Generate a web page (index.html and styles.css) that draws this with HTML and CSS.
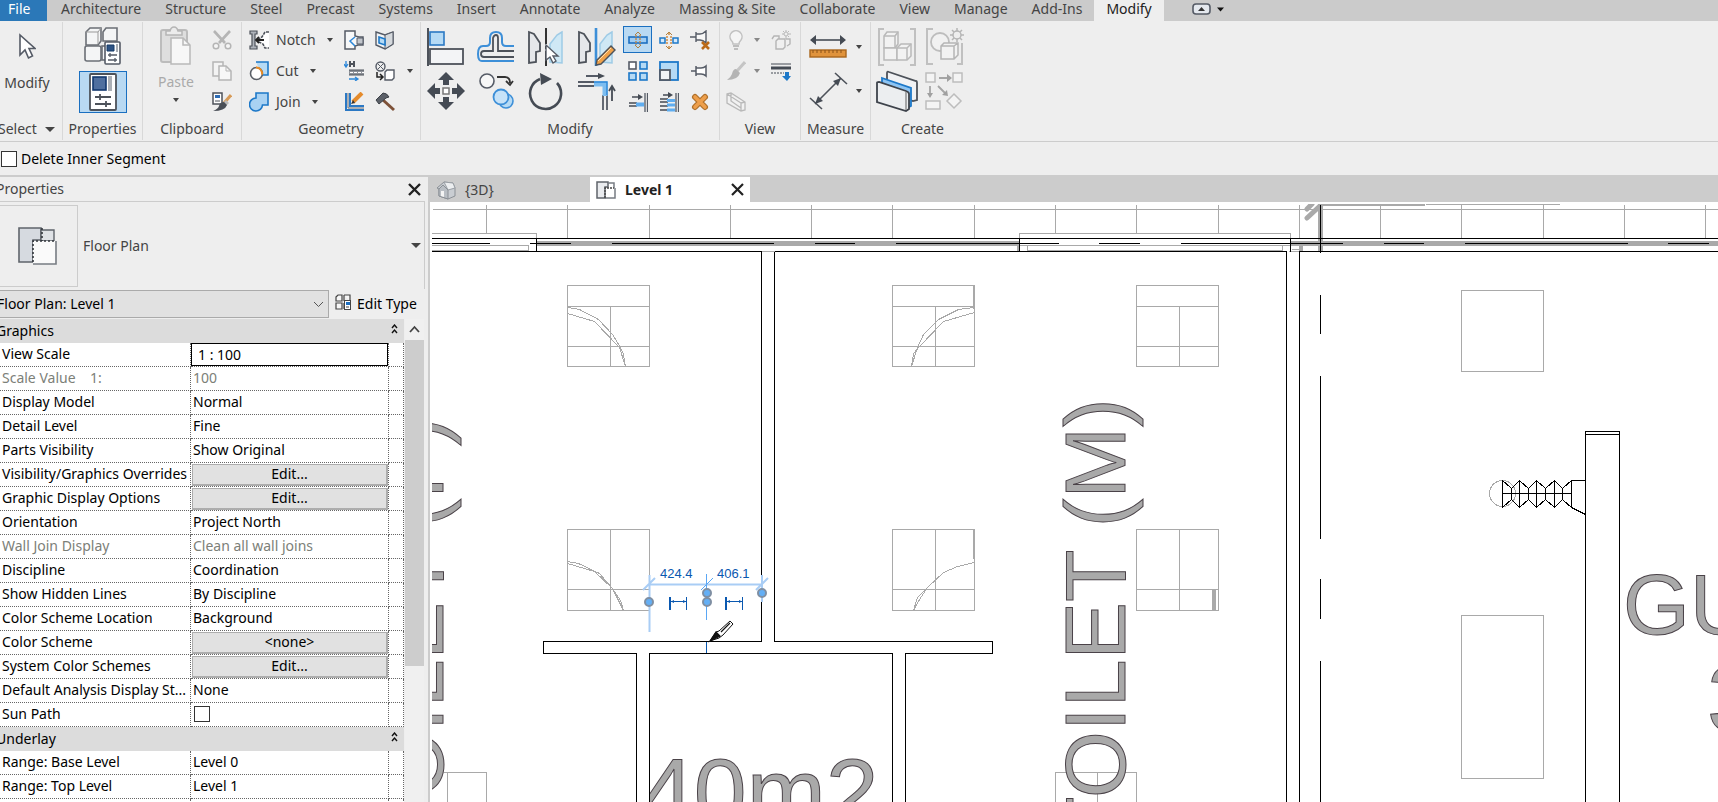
FILE: index.html
```
<!DOCTYPE html>
<html lang="en">
<head>
  <meta charset="utf-8">
  <title>Floor Plan: Level 1</title>
  <link rel="stylesheet" href="styles.css">
</head>
<body>
  <nav class="tabs">
    <button class="tab file">File</button>
    <button class="tab">Architecture</button>
    <button class="tab">Structure</button>
    <button class="tab">Steel</button>
    <button class="tab">Precast</button>
    <button class="tab">Systems</button>
    <button class="tab">Insert</button>
    <button class="tab">Annotate</button>
    <button class="tab">Analyze</button>
    <button class="tab">Massing &amp; Site</button>
    <button class="tab">Collaborate</button>
    <button class="tab">View</button>
    <button class="tab">Manage</button>
    <button class="tab">Add-Ins</button>
    <button class="tab active">Modify</button>
    <button class="collapse" aria-label="Minimize ribbon">
      <svg width="32" height="14" viewBox="0 0 32 14"><rect x="1" y="2" width="17" height="10" rx="3" fill="#e4e8ee" stroke="#555b66" stroke-width="1.6"/><path d="M6 9h7L9.500 5z" fill="#333"/><path d="M25 5.500h7l-3.500 4z" fill="#111"/></svg>
    </button>
  </nav>

  <!-- ribbon -->
  <div class="ribbon">
    <section class="panel select">
      <div class="body">
        <button class="tall">
          <svg width="18" height="28" viewBox="0 0 18 28"><path d="M2 2v20l5-5 3.500 8 4-2-3.500-7.500h6z" fill="#fff" stroke="#555b66" stroke-width="1.6"/></svg>
          Modify
        </button>
      </div>
      <h2>Select <i class="caret big"></i></h2>
    </section>

    <section class="panel properties">
      <div class="body stack">
        <button aria-label="Type Properties">
          <svg width="40" height="40" viewBox="0 0 40 40"><g fill="#f4f5f6" stroke="#6b6f76" stroke-width="1.6"><path d="M3 6l4-4h11v13l-3 4H3z"/><path d="M20 6l3-4h11v13H20z"/><rect x="2" y="20" width="16" height="15" rx="2"/><rect x="19" y="20" width="10" height="14"/></g><path d="M3 6h12v12M15 6l3-4" fill="none" stroke="#999" /><rect x="22" y="16" width="15" height="22" rx="1" fill="#fff" stroke="#555b66" stroke-width="1.6"/><path d="M24 19h7v6h-7z" fill="#2d5283" stroke="#163a66"/><path d="M34 18v8" stroke="#a8acb2" stroke-width="2"/><path d="M25 29h9M25 34h9M27 27v4M32 32v4" stroke="#555b66" stroke-width="1.300"/></svg>
        </button>
        <button class="on wide" aria-label="Properties palette">
          <svg width="30" height="38" viewBox="0 0 30 38"><rect x="2" y="1" width="26" height="36" rx="1" fill="#fff" stroke="#4d525a" stroke-width="1.800"/><rect x="5" y="4" width="13" height="13" fill="#4f6f9f" stroke="#12386e" stroke-width="1.6"/><path d="M22 3v15" stroke="#abb0b7" stroke-width="4"/><path d="M7 24h16M7 31h16M12 21v6M18 28v6" stroke="#4d525a" stroke-width="1.800"/></svg>
        </button>
      </div>
      <h2>Properties</h2>
    </section>

    <section class="panel clipboard">
      <div class="body">
        <button class="tall paste" disabled>
          <svg width="34" height="40" viewBox="0 0 34 40"><rect x="2" y="4" width="26" height="32" rx="2" fill="#dedede" stroke="#bcbcbc" stroke-width="2"/><path d="M7 9V5h4q1-4 4-4t4 4h4v4z" fill="#ececec" stroke="#b5b5b5" stroke-width="1.500"/><path d="M12 12h12l7 7v19H12z" fill="#f7f7f7" stroke="#b9b9b9" stroke-width="1.500"/><path d="M24 12v7h7" fill="none" stroke="#b9b9b9" stroke-width="1.500"/></svg>
          Paste
          <i class="caret"></i>
        </button>
        <div class="small-grid">
          <button aria-label="Cut to clipboard"><svg width="20" height="20" viewBox="0 0 20 20"><path d="M2 1l11 12M18 1L7 13" stroke="#b5b5b5" stroke-width="2.600"/><circle cx="4" cy="16" r="2.800" fill="#f5f5f5" stroke="#b5b5b5" stroke-width="1.500"/><circle cx="16" cy="16" r="2.800" fill="#f5f5f5" stroke="#b5b5b5" stroke-width="1.500"/></svg></button>
          <button aria-label="Copy to clipboard"><svg width="20" height="20" viewBox="0 0 20 20"><path d="M9 15H1V1h10v4" fill="#f3f3f3" stroke="#b5b5b5" stroke-width="1.500"/><path d="M7 5h7l5 5v9H7z" fill="#f8f8f8" stroke="#b5b5b5" stroke-width="1.500"/><path d="M14 5v5h5" fill="none" stroke="#b5b5b5"/></svg></button>
          <button aria-label="Match type"><svg width="20" height="20" viewBox="0 0 20 20"><rect x="1" y="1" width="9" height="11" fill="#fff" stroke="#4d525a" stroke-width="1.500"/><path d="M3 3h5v3H3z" fill="#2d6cb5"/><path d="M3 9h5" stroke="#4d525a"/><path d="M19 3l-7 8" stroke="#d79a57" stroke-width="3"/><path d="M14 8l3 3-3 3-3-3z" fill="#bbb"/><path d="M12 10l3 3q-2 6-14 6 5-2 6-5 1-4 5-4z" fill="#4a4f57"/></svg></button>
        </div>
      </div>
      <h2>Clipboard</h2>
    </section>

    <section class="panel geometry">
      <div class="body">
        <div class="labelled">
          <button><svg width="20" height="20" viewBox="0 0 20 20"><path d="M1 1h7v3H6v12h2v3H1v-3h2V4H1z" fill="#aeb3ba" stroke="#4d525a" stroke-width="1.200"/><path d="M20 2h-4l-3 5-3 2v3l4 2 2 4h4" fill="#fff" stroke="#4d525a" stroke-width="1.600" stroke-dasharray="3 1"/><path d="M7 10h8M10 7l-3 3 3 3" fill="none" stroke="#222" stroke-width="1.800"/></svg> Notch <i class="caret"></i></button>
          <button><svg width="20" height="20" viewBox="0 0 20 20"><path d="M7 1h12v13h-6" fill="#b5daf5" stroke="#1d78c8" stroke-width="1.600"/><circle cx="7.500" cy="12.500" r="6" fill="#fff" stroke="#5a5f67" stroke-width="1.600"/><path d="M7 6.500a6 6 0 0 1 6 7" fill="none" stroke="#e88b25" stroke-width="2"/></svg> Cut <i class="caret"></i></button>
          <button><svg width="20" height="20" viewBox="0 0 20 20"><path d="M7 1h12v12h-5.500a6.500 6.500 0 1 1-6.500-7z" fill="#a9d2f3" stroke="#1d78c8" stroke-width="1.600"/></svg> Join <i class="caret"></i></button>
        </div>
        <div class="small-grid three">
          <button aria-label="Cope"><svg width="20" height="20" viewBox="0 0 20 20"><path d="M1 1h10v5l4 1h4v8h-5l-3 1v3H1z" fill="#f7f8f9" stroke="#555b66" stroke-width="1.500"/><path d="M11 7l-5 4 5 5" fill="none" stroke="#2b86d8" stroke-width="1.500"/><path d="M13 8h6v6h-6z" fill="#c2c6cc" stroke="#555b66"/></svg></button>
          <button aria-label="Wall joins"><svg width="20" height="20" viewBox="0 0 20 20"><path d="M1 2l9 3 8-3v12l-8 5-9-4z" fill="#f1f3f5" stroke="#555b66" stroke-width="1.400"/><path d="M10 5v14l8-5V2z" fill="#d5d9dd" stroke="#555b66"/><path d="M4 7l6 2v6l-6-2z" fill="#b5daf5" stroke="#1d78c8" stroke-width="1.600"/></svg></button>
          <i></i>
          <button aria-label="Beam joins"><svg width="20" height="20" viewBox="0 0 20 20"><path d="M2 0v5M0 3l2 3 2-3M5 18h8M11 16l3 2-3 2" fill="none" stroke="#2b86d8" stroke-width="1.300"/><path d="M6 0v6M10 0v6M6 3h4" stroke="#4d525a" stroke-width="2"/><path d="M5 9h15v5H5z" fill="#8d9198"/><path d="M5 9h15M5 14h15" stroke="#4d525a"/><path d="M6 11.500h14" stroke="#fff" stroke-dasharray="3 1"/></svg></button>
          <button aria-label="Split face"><svg width="20" height="20" viewBox="0 0 20 20"><circle cx="5.500" cy="5.500" r="4.500" fill="#eee" stroke="#555b66" stroke-width="1.400"/><path d="M3 3l5 5M8 3L3 8" stroke="#555b66"/><path d="M10 11l2-2h7v8l-2 2h-7z" fill="#fff" stroke="#555b66" stroke-width="1.400"/><path d="M2 11v5h5M5 13l3 3-3 3" fill="none" stroke="#222" stroke-width="1.500"/></svg></button>
          <i class="caret"></i>
          <button aria-label="Paint"><svg width="20" height="20" viewBox="0 0 20 20"><path d="M2 1v17h18M6 1v13h14" fill="none" stroke="#2b78c4" stroke-width="2"/><path d="M4 1v15h16" fill="none" stroke="#6b7078"/><path d="M18 1L9 10" stroke="#e58b2c" stroke-width="4"/><path d="M9 8l2 3-4 1z" fill="#333"/></svg></button>
          <button aria-label="Demolish"><svg width="20" height="20" viewBox="0 0 20 20"><path d="M8 8l11 10" stroke="#7d5138" stroke-width="3"/><path d="M1 8l7-7q4 0 6 4l-3 1-7 6z" fill="#5b6068" stroke="#3c4047"/></svg></button>
          <i></i>
        </div>
      </div>
      <h2>Geometry</h2>
    </section>

    <section class="panel modify">
      <div class="body">
        <div class="big-grid">
          <button aria-label="Align"><svg width="40" height="40" viewBox="0 0 40 40"><path d="M2 1v38" stroke="#4d525a" stroke-width="2"/><rect x="4" y="5" width="14" height="13" fill="#b5daf5" stroke="#2b78c4" stroke-width="1.600"/><rect x="4" y="22" width="33" height="15" fill="#f3f4f6" stroke="#4d525a" stroke-width="1.800"/></svg></button>
          <button aria-label="Offset"><svg width="40" height="40" viewBox="0 0 40 40"><path d="M38 19h-8q-4 0-4-4v-4q0-6-6-6t-6 6v4q0 4-4 4H7q-5 0-5 8t5 7h31" fill="none" stroke="#3d8fd8" stroke-width="2"/><path d="M38 24H22V11q0-3-2-3t-3 3v13H8q-3 0-3 3t3 3h30" fill="none" stroke="#4d525a" stroke-width="1.800"/></svg></button>
          <button aria-label="Mirror - Pick Axis"><svg width="40" height="40" viewBox="0 0 40 40"><path d="M3 5l5 2 6 9v8l-4 1v10l-7 1z" fill="#e5e7ea" stroke="#4d525a" stroke-width="1.800"/><path d="M36 5l-5 3-7 9v18l12 1z" fill="#cfe8f5" stroke="#9fcbe6" stroke-width="1.500"/><path d="M20 1v38" stroke="#333" stroke-width="2" stroke-dasharray="16 2 3 2"/><path d="M20 18v15l4-3 3 6 3-2-3-5h5z" fill="#fff" stroke="#555b66" stroke-width="1.400"/></svg></button>
          <button aria-label="Mirror - Draw Axis"><svg width="40" height="40" viewBox="0 0 40 40"><path d="M3 5l5 2 6 9v8l-4 1v10l-7 1z" fill="#e5e7ea" stroke="#4d525a" stroke-width="1.800"/><path d="M36 5l-5 3-7 9v18l12 1z" fill="#cfe8f5" stroke="#9fcbe6" stroke-width="1.500"/><path d="M20 1v38" stroke="#3d8fd8" stroke-width="2.600"/><path d="M21 33L35 19l4 4-14 14-5 1z" fill="#f0a24a" stroke="#4d525a" stroke-width="1.400"/><path d="M22 34l13-13" stroke="#ffe0ae"/></svg></button>
          <button aria-label="Move"><svg width="40" height="40" viewBox="0 0 40 40"><path d="M20 1l8 8h-5v5h-6V9h-5zM20 39l8-8h-5v-5h-6v5h-5zM1 20l8-8v5h5v6H9v5zM39 20l-8-8v5h-5v6h5v5z" fill="#454b54"/><rect x="17" y="17" width="6" height="6" fill="#fff" stroke="#777" stroke-width="1.500"/></svg></button>
          <button aria-label="Copy"><svg width="40" height="40" viewBox="0 0 40 40"><circle cx="11" cy="10" r="7" fill="#f7f7f7" stroke="#555b66" stroke-width="1.600"/><path d="M21 6h8q5 0 5 6M30 10l4 4 3-4" fill="none" stroke="#333" stroke-width="1.800"/><circle cx="30" cy="30" r="7" fill="#b5daf5" stroke="#3d8fd8" stroke-width="1.600"/><circle cx="25" cy="26" r="7.500" fill="#c6e2f8" stroke="#3d8fd8" stroke-width="1.800"/></svg></button>
          <button aria-label="Rotate"><svg width="40" height="40" viewBox="0 0 40 40"><path d="M14 8a15.500 15.500 0 1 0 17 4" fill="none" stroke="#454b54" stroke-width="2.600"/><path d="M14 2l12 6-11 6z" fill="#454b54"/></svg></button>
          <button aria-label="Trim/Extend to Corner"><svg width="40" height="40" viewBox="0 0 40 40"><path d="M2 11h16M2 15h16M27 24v15M31 24v15M10 5h15" stroke="#555b66" stroke-width="1.800"/><path d="M22 2l7 3-7 3z" fill="#454b54"/><path d="M18 13h11v12" fill="none" stroke="#7dbdf0" stroke-width="5"/><path d="M18 11h13v13" fill="none" stroke="#2b86d8" stroke-width="1.400"/><path d="M36 30V16M33 20l3-5 3 5" fill="none" stroke="#454b54" stroke-width="1.800"/></svg></button>
        </div>
        <div class="small-grid tools">
          <button class="on" aria-label="Split Element"><svg width="20" height="20" viewBox="0 0 20 20"><path d="M10 2l-3 3M10 2l3 3M10 18l-3-3M10 18l3-3" stroke="#b0803f"/><rect x="1" y="7" width="18" height="6" fill="#9fccf2" stroke="#1d6fc0" stroke-width="1.600"/><path d="M8 5v10M12 5v10" stroke="#b98b56" stroke-width="1.500" stroke-dasharray="2 1"/></svg></button>
          <button aria-label="Split with Gap"><svg width="20" height="20" viewBox="0 0 20 20"><rect x="1" y="8" width="5" height="5" fill="#d5e9fa" stroke="#1d78c8" stroke-width="1.500"/><rect x="14" y="8" width="5" height="5" fill="#d5e9fa" stroke="#1d78c8" stroke-width="1.500"/><path d="M8 6v9M12 6v9M10 3v2M10 16v2" stroke="#d18c42" stroke-width="1.500" stroke-dasharray="2 1"/><path d="M7 5l3-3 3 3M7 16l3 3 3-3" fill="none" stroke="#b0803f"/></svg></button>
          <button aria-label="Unpin"><svg width="20" height="20" viewBox="0 0 20 20"><path d="M0 7h6M6 2v10M6 4h4q3 0 6-3v12q-3-3-6-3H6" fill="#f7f7f7" stroke="#555b66" stroke-width="1.400"/><path d="M12 12l7 7M19 12l-7 7" stroke="#bb6a18" stroke-width="2.600"/></svg></button>
          <button aria-label="Array"><svg width="20" height="20" viewBox="0 0 20 20"><rect x="1" y="1" width="7" height="7" fill="#fff" stroke="#555b66" stroke-width="1.600"/><g fill="#b5daf5" stroke="#1d78c8" stroke-width="1.600"><rect x="12" y="1" width="7" height="7"/><rect x="1" y="12" width="7" height="7"/><rect x="12" y="12" width="7" height="7"/></g></svg></button>
          <button aria-label="Scale"><svg width="20" height="20" viewBox="0 0 20 20"><rect x="1" y="1" width="18" height="18" fill="#b5daf5" stroke="#1d78c8" stroke-width="1.800"/><rect x="1" y="9" width="10" height="10" fill="#f3f4f6" stroke="#555b66" stroke-width="1.800"/></svg></button>
          <button aria-label="Pin"><svg width="20" height="20" viewBox="0 0 20 20"><path d="M1 10h5M6 5v10M6 7h5q3 0 5-2v10q-2-2-5-2H6" fill="#fff" stroke="#555b66" stroke-width="1.500"/></svg></button>
          <button aria-label="Trim/Extend Single"><svg width="20" height="20" viewBox="0 0 20 20"><path d="M4 5h8M1 11h8M1 14h8" stroke="#454b54" stroke-width="1.500"/><path d="M10 2l5 3-5 3z" fill="#454b54"/><path d="M8 12.500h8" stroke="#5fadf0" stroke-width="4"/><path d="M17 1v19M19.500 1v19" stroke="#555b66" stroke-width="1.300"/></svg></button>
          <button aria-label="Trim/Extend Multiple"><svg width="20" height="20" viewBox="0 0 20 20"><path d="M4 3h8M1 7h8M1 10h8M1 14h8M1 18h8" stroke="#454b54" stroke-width="1.300"/><path d="M9 0l5 3-5 3z" fill="#454b54"/><path d="M8 8.500h8M8 13h8M8 18h8" stroke="#5fadf0" stroke-width="2.800"/><path d="M17 1v19M19.500 1v19" stroke="#555b66" stroke-width="1.300"/></svg></button>
          <button aria-label="Delete"><svg width="20" height="20" viewBox="0 0 20 20"><path d="M5 5l10 10M15 5L5 15" stroke="#b0712c" stroke-width="6" stroke-linecap="round"/><path d="M5 5l10 10M15 5L5 15" stroke="#ee9f4b" stroke-width="3.600" stroke-linecap="round"/></svg></button>
        </div>
      </div>
      <h2>Modify</h2>
    </section>

    <section class="panel view">
      <div class="body">
        <div class="small-grid three">
          <button aria-label="Hide in View"><svg width="20" height="20" viewBox="0 0 20 20"><path d="M7 14q0-2-2-4a6 6 0 1 1 10 0q-2 2-2 4z" fill="#f5f5f5" stroke="#c2c2c2" stroke-width="1.500"/><path d="M7 16h6M8 19h4" stroke="#bdbdbd" stroke-width="1.800"/></svg></button>
          <i class="caret dim-caret"></i>
          <button aria-label="Displace Elements"><svg width="20" height="20" viewBox="0 0 20 20"><path d="M1 9l2-3h5v3M5 11l2-2h7v8l-2 2H5zM15 9h4v5l-3 2" fill="#f0f0f0" stroke="#b5b5b5" stroke-width="1.400"/><circle cx="15" cy="4" r="2" fill="none" stroke="#b8b8b8"/><path d="M15 0v2M15 6v3M11 4h2M17 4h3M12 1l1 1M18 7l-1-1M18 1l-1 1" stroke="#b8b8b8"/></svg></button>
          <button aria-label="Override Graphics"><svg width="20" height="20" viewBox="0 0 20 20"><path d="M19 1l-8 9" stroke="#c5c5c5" stroke-width="3"/><path d="M10 8l4 4q-2 7-13 7 4-3 5-6 1-5 4-5z" fill="#b4b4b4"/></svg></button>
          <i class="caret dim-caret"></i>
          <button aria-label="Linework"><svg width="20" height="20" viewBox="0 0 20 20"><path d="M0 3h20" stroke="#454b54"/><path d="M0 7h20" stroke="#454b54" stroke-width="3"/><path d="M0 12h13" stroke="#454b54" stroke-dasharray="2 1"/><path d="M14 11h4v4h2l-4 5-5-5h3z" fill="#1d78c8"/></svg></button>
          <button aria-label="Selection Box"><svg width="20" height="20" viewBox="0 0 20 20"><path d="M1 2l4-1 14 9v8l-4 1L1 11zM1 2l14 9v8M15 11l4-1M5 1v8l10 7" fill="#f1f1f1" stroke="#b9b9b9" stroke-width="1.300"/></svg></button>
          <i></i><i></i>
        </div>
      </div>
      <h2>View</h2>
    </section>

    <section class="panel measure">
      <div class="body">
        <div class="big-grid">
          <button aria-label="Measure between references"><svg width="40" height="40" viewBox="0 0 40 40"><path d="M5 13h30" stroke="#454b54" stroke-width="1.600"/><path d="M2 13l6-5v10zM38 13l-6-5v10z" fill="#454b54"/><rect x="2" y="23" width="36" height="7" fill="#e0933c" stroke="#a9661d" stroke-width="1.400"/><path d="M5 23v3M9 23v3M13 23v3M17 23v3M21 23v3M25 23v3M29 23v3M33 23v3" stroke="#8a5318"/></svg></button>
          <i class="caret"></i>
          <button aria-label="Aligned Dimension"><svg width="40" height="40" viewBox="0 0 40 40"><path d="M7 33L33 7M2 27l12 11M27 2l12 11" stroke="#4d525a" stroke-width="1.600"/><path d="M7 33l3-8 5 5zM33 7l-8 3 5 5z" fill="#454b54"/></svg></button>
          <i class="caret"></i>
        </div>
      </div>
      <h2>Measure</h2>
    </section>

    <section class="panel create">
      <div class="body">
        <div class="big-grid">
          <button aria-label="Create Group"><svg width="40" height="40" viewBox="0 0 40 40"><path d="M7 2H2v36h5M33 2h5v36h-5" fill="none" stroke="#c0c0c0" stroke-width="2"/><g fill="#f2f2f2" stroke="#b9b9b9" stroke-width="1.500"><path d="M7 9l3-4h11v12l-3 4H7z"/><path d="M7 21h13v12H7z"/><path d="M20 21l4-4h10v12l-4 4H20z"/><path d="M7 9h11v12M18 9l3-4M20 21h10v12M30 21l4-4" fill="none"/></g></svg></button>
          <button aria-label="Create Similar"><svg width="40" height="40" viewBox="0 0 40 40"><path d="M8 2H2v35h6M32 37h5V16" fill="none" stroke="#c0c0c0" stroke-width="2"/><circle cx="15" cy="15" r="9" fill="#f1f1f1" stroke="#bdbdbd" stroke-width="1.800"/><path d="M16 19l3-3h14v12l-4 4H16zM16 19h13v13M29 19l4-3" fill="#f2f2f2" stroke="#b5b5b5" stroke-width="1.500"/><circle cx="32" cy="8" r="4" fill="#eee" stroke="#b5b5b5" stroke-width="1.500"/><path d="M32 1v3M32 12v3M25 8h3M36 8h3M27 3l2 2M37 13l-2-2M37 3l-2 2M27 13l2-2" stroke="#b5b5b5" stroke-width="1.500"/></svg></button>
          <button aria-label="Create Parts"><svg width="42" height="42" viewBox="0 0 42 42"><path d="M11 3q0-2 2-1l27 9q1 0 1 2v17l-4 1-26-9z" fill="#f1f2f4" stroke="#4d525a" stroke-width="1.800"/><path d="M6 8l29 10v18l-4 2L6 28z" fill="#8dc4f3" stroke="#1d78c8" stroke-width="1.800"/><path d="M1 13q0-1 2-1l27 9q3 1 3 3v15l-3 2L1 32z" fill="#eceef0" stroke="#3e434b" stroke-width="1.800"/><path d="M30 22v18" stroke="#888" stroke-width="1.400"/></svg></button>
          <button aria-label="Create Assembly"><svg width="40" height="40" viewBox="0 0 40 40"><g fill="#f4f4f4" stroke="#bdbdbd" stroke-width="1.500"><path d="M1 2h9v9H1zM28 2h9v9h-9zM1 30h14v8H1zM29 23l7 7-7 7-7-7z"/></g><path d="M14 7h11M5 15v10M13 15l7 7" stroke="#a5a5a5" stroke-width="1.800"/><path d="M22 3l5 4-5 4zM2 22h6l-3 5zM23 25l-6-1 5-5z" fill="#a0a0a0"/></svg></button>
        </div>
      </div>
      <h2>Create</h2>
    </section>
  </div>

  <div class="options">
    <input type="checkbox" id="inner"><label for="inner">Delete Inner Segment</label>
  </div>

  <main class="work">
    <aside class="dock">
      <header class="dock-title">
        <span>Properties</span>
        <button aria-label="Close"><svg width="13" height="13" viewBox="0 0 13 13"><path d="M1 1l11 11M12 1L1 12" stroke="#222" stroke-width="2.400"/></svg></button>
      </header>
      <div class="type">
        <div class="preview">
          <svg width="40" height="40" viewBox="0 0 40 40"><path d="M2 2h22v12H16v22H2z" fill="#d6dae0" stroke="#5f646b" stroke-width="1.600"/><path d="M24 4h13v11H24z" fill="#dfe2e6" stroke="#5f646b" stroke-width="1.400"/><path d="M16 15h23v23H16z" fill="#fafafa"/><path d="M39 15v23H16" fill="none" stroke="#777c83" stroke-width="1.600"/><path d="M16 36V15h23M25 2v13" fill="none" stroke="#33373d" stroke-width="1.600" stroke-dasharray="2 2"/></svg>
        </div>
        <span>Floor Plan</span>
        <i class="caret big"></i>
      </div>
      <div class="instance">
        <div class="combo">
          <select aria-label="Instance"><option>Floor Plan: Level 1</option></select>
          <svg width="11" height="7" viewBox="0 0 11 7"><path d="M1 1l4.500 4.500L10 1" fill="none" stroke="#555"/></svg>
        </div>
        <button class="edit-type">
          <svg width="17" height="17" viewBox="0 0 17 17"><path d="M1 3l2-2h4v6H1zM9 1h6v6M9 1v6M1 9h6v6H1zM9 9v6" fill="#f7f7f7" stroke="#444" stroke-width="1.200"/><rect x="9.500" y="6.500" width="6" height="9" fill="#fff" stroke="#444"/><path d="M11 8h4v3h-4z" fill="#1d6fc0"/><path d="M11 13h3" stroke="#444"/></svg>
          Edit Type
        </button>
      </div>
      <div class="grid-wrap">
        <table class="props">
          <colgroup><col class="c-name"><col class="c-value"><col class="c-link"></colgroup>
          <tbody>
            <tr class="group"><th colspan="3">Graphics <svg width="7" height="10" viewBox="0 0 7 10"><path d="M1 4l2.500-3L6 4M1 9l2.500-3L6 9" fill="none" stroke="#111" stroke-width="1.400"/></svg></th></tr>
            <tr><td><label for="scale">View Scale</label></td><td class="field"><input type="text" id="scale" value="1 : 100"></td><td></td></tr>
            <tr class="off"><td>Scale Value &nbsp;&nbsp; 1:</td><td>100</td><td></td></tr>
            <tr><td>Display Model</td><td>Normal</td><td></td></tr>
            <tr><td>Detail Level</td><td>Fine</td><td></td></tr>
            <tr><td>Parts Visibility</td><td>Show Original</td><td></td></tr>
            <tr><td>Visibility/Graphics Overrides</td><td class="field"><button>Edit...</button></td><td></td></tr>
            <tr><td>Graphic Display Options</td><td class="field"><button>Edit...</button></td><td></td></tr>
            <tr><td>Orientation</td><td>Project North</td><td></td></tr>
            <tr class="off"><td>Wall Join Display</td><td>Clean all wall joins</td><td></td></tr>
            <tr><td>Discipline</td><td>Coordination</td><td></td></tr>
            <tr><td>Show Hidden Lines</td><td>By Discipline</td><td></td></tr>
            <tr><td>Color Scheme Location</td><td>Background</td><td></td></tr>
            <tr><td>Color Scheme</td><td class="field"><button>&lt;none&gt;</button></td><td></td></tr>
            <tr><td>System Color Schemes</td><td class="field"><button>Edit...</button></td><td></td></tr>
            <tr><td>Default Analysis Display St...</td><td>None</td><td></td></tr>
            <tr><td><label for="sun">Sun Path</label></td><td><input type="checkbox" id="sun"></td><td></td></tr>
            <tr class="group"><th colspan="3">Underlay <svg width="7" height="10" viewBox="0 0 7 10"><path d="M1 4l2.500-3L6 4M1 9l2.500-3L6 9" fill="none" stroke="#111" stroke-width="1.400"/></svg></th></tr>
            <tr><td>Range: Base Level</td><td>Level 0</td><td></td></tr>
            <tr><td>Range: Top Level</td><td>Level 1</td><td></td></tr>
            <tr><td></td><td></td><td></td></tr>
          </tbody>
        </table>
        <div class="scroll">
          <svg width="11" height="8" viewBox="0 0 11 8"><path d="M1 7l4.500-5L10 7" fill="none" stroke="#444" stroke-width="1.800"/></svg>
          <div class="thumb"></div>
        </div>
      </div>
    </aside>

    <section class="views">
      <div class="view-tabs">
        <button class="view-tab">
          <svg width="20" height="20" viewBox="0 0 20 20"><path d="M1 8l7-6 9 1 2 5v8l-7 3-9-3V9z" fill="#c9cdd2" stroke="#8b9096"/><path d="M8 2l9 1 2 5-7 2z" fill="#eceef0" stroke="#9a9fa5"/><path d="M3 9l4-4 5 5v9l-9-3z" fill="#b9bec4" stroke="#8b9096"/><path d="M5 11h3v6l-3-1z" fill="#f4f4f4"/></svg>
          <span>{3D}</span>
        </button>
        <button class="view-tab current">
          <svg width="20" height="18" viewBox="0 0 20 18"><path d="M1 1h11v5H9v11H1z" fill="#e9ebee" stroke="#5f646b" stroke-width="1.500"/><path d="M12 2h6v5M9 17h10V7" fill="none" stroke="#777c83" stroke-width="1.500"/><path d="M9 17V7h9" fill="none" stroke="#444" stroke-width="1.400" stroke-dasharray="2 1"/></svg>
          <span>Level 1</span>
          <svg class="close" width="13" height="13" viewBox="0 0 13 13"><path d="M1 1l11 11M12 1L1 12" stroke="#222" stroke-width="2.200"/></svg>
        </button>
      </div>

      <div class="canvas">
        <svg class="plan" viewBox="432 204 1286 598" preserveAspectRatio="xMinYMin slice">
          <!-- grey underlay: mullions, ceiling openings -->
          <g class="fill">
            <path d="M537 241h483v5H537zM1290 241h428v5H1290zM1017 246h2v5h-2zM1299 241h4v10h-4zM1318 204h5v47h-5zM1323 204h102v2h-102zM973 285h2v24h-2zM973 529h2v30h-2zM1212 589h4v22h-4z"/>
          </g>
          <path class="slash" d="M1307 209l5-5M1307 218l14-13"/>
          <g class="under" transform="translate(.5 .5)">
            <path d="M432 209H1718M1425 204H1559"/>
            <path d="M486 204V233M567 204V238M649 204V238M730 204V238M811 204V238M892 204V238M974 204V238M1055 204V233M1136 204V233M1218 204V233M1299 204V238M1380 204V238M1461 204V238M1543 204V238M1624 204V238M1705 204V238"/>
            <path d="M431 233H536V238M431 245H528V250H431M1019 238V233H1290V238M1019 245H1290M1027 245V250H1282V245M761 251H774M1291 249H1299M1288 251H1299"/>
            <path d="M567 285H649V366H567zM567 306H649M567 346H649M610 306V366"/>
            <path d="M892 285H974V366H892zM892 306H974M892 346H974M935 306V366"/>
            <path d="M1136 285H1218V366H1136zM1136 306H1218M1136 346H1218M1179 306V366"/>
            <path d="M567 529H649V610H567zM567 589H649M610 529V610"/>
            <path d="M892 529H974V610H892zM892 589H974M935 529V610"/>
            <path d="M1136 529H1218V610H1136zM1136 589H1218M1179 529V610"/>
            <path d="M443 772H486V802M447 772V802M1055 802V772H1136V802M1097 772V802"/>
            <path d="M1461 290H1543V371H1461zM1461 615H1543V778H1461z"/>
            <path d="M567 307l12 2 19 10 14 15 8 13 3 7 2 12M567 313l27 8 25 26 6 19"/>
            <path d="M974 307l-16 2-20 10-15 15-6 13-6 19M974 312l-31 9-24 25-6 7-2 13"/>
            <path d="M567 561l11 2 21 10 13 15 8 12 3 10M567 563l27 8 18 17 11 22"/>
            <path d="M974 562l-17 4-14 6-16 15-8 12-6 11M927 587l-10 10-4 13"/>
            <circle cx="1502" cy="493" r="13"/>
          </g>

          <!-- walls -->
          <g class="wall" transform="translate(.5 .5)">
            <path d="M431 238H1718M431 251H761V641H543V653H636V802M774 251V641H992V653H905V802M774 251H1286V802M1718 251H1299V802M649 802V653H892V802M536 238V251M1019 238V251M1290 238V251"/>
            <path d="M431 243H489M529 243H570M611 243H773M814 243H854M895 243H1058M1098 243H1139M1180 243H1342M1383 243H1423M1464 243H1627M1667 243H1708"/>
            <path d="M1320 204V252M1320 294V333M1320 375V538M1320 578V618M1320 660V802"/>
            <path d="M1585 802V431H1619V802M1585 434H1619"/>
            <path d="M1502 480V507M1519 480V507M1536 480V507M1554 480V507M1571 480V507M1502 493H1571M1511 488V499M1528 488V499M1545 488V499M1562 488V499"/>
            <path d="M1502 480l9 8 8-8 9 8 8-8 9 8 9-8 8 8 9-8H1585M1502 507l9-8 8 8 9-8 8 8 9-8 9 8 8-8 9 8 14 7"/>
          </g>

          <!-- room tags -->
          <g class="room">
            <text transform="translate(443 849) rotate(-90)">TOILET (F)</text>
            <text transform="translate(1125 849) rotate(-90)">TOILET (M)</text>
            <text x="1623" y="634">GUARD</text>
            <text class="area" x="1707" y="731">3</text>
            <svg x="650" y="740" width="240" height="62" viewBox="650 740 240 62"><text class="area" x="641" y="825">40m2</text></svg>
          </g>

          <!-- temporary dimensions -->
          <path class="dim-light" d="M649 584.500H762M649.500 575V632M762 575V602M643 590l12-12M756 590l12-12"/>
          <path class="dim" d="M706.500 574V620M701 590l12-12"/>
          <g class="grip"><circle cx="649" cy="602" r="4"/><circle cx="707" cy="593" r="4"/><circle cx="707" cy="602" r="4"/><circle cx="762" cy="593" r="4"/></g>
          <path class="dim-dark" d="M670.500 597V610M686.500 597V610M671 601.500H686M726.500 597V610M742.500 597V610M727 601.500H742M706.500 642V653"/>
          <path class="dim-dark" d="M669.500 597V610M725.500 597V610M674 600.500L672 601.500L674 602.500M683 600.500L685 601.500L683 602.500M730 600.500L728 601.500L730 602.500M739 600.500L741 601.500L739 602.500"/>
          <text class="dim-text" x="660" y="578">424.4</text>
          <text class="dim-text" x="717" y="578">406.1</text>

          <path d="M710 641l6-9 3-1 11-10 3 3-10 11-4 3z" fill="#fff" stroke="#111" stroke-width="1"/>
          <path d="M710 641l6-9 4 4zM721 632l9-9" fill="#111" stroke="#111" stroke-width="1.200"/>
        </svg>
      </div>
    </section>
  </main>
</body>
</html>
```
FILE: styles.css
```
* {
  box-sizing: border-box;
}
body {
  margin: 0;
  height: 100vh;
  display: flex;
  flex-direction: column;
  overflow: hidden;
  background: #eee;
  color: #444;
  font-family: "Noto Sans", "Open Sans", sans-serif;
  font-size: 14px;
  line-height: 20px;
}
button, input, select {
  font: inherit;
  color: inherit;
  margin: 0;
}
button {
  border: none;
  background: none;
  padding: 0;
  white-space: nowrap;
}
svg {
  display: block;
  flex: none;
}
.caret {
  display: block;
  border: 3px solid transparent;
  border-top: 4px solid #444;
  border-bottom: none;
}
.caret.big {
  border-width: 5px;
  border-bottom: none;
}
.dim-caret {
  border-top-color: #888;
}

/* ribbon tabs */
.tabs {
  display: flex;
  height: 21px;
  background: #cbcbcb;
}
.tab {
  padding: 0 12px 3px;
  line-height: 18px;
}
.tab.file {
  background: #2b78b8;
  color: #fff;
  width: 47px;
  padding: 0 0 3px 8px;
  margin-right: 2px;
  text-align: left;
}
.tab.active {
  background: #eee;
  color: #222;
}
.collapse {
  margin-left: 28px;
  padding-bottom: 3px;
}

/* ribbon */
.ribbon {
  display: flex;
  height: 121px;
  border-bottom: 1px solid #ccc;
}
.panel {
  flex: none;
  display: flex;
  flex-direction: column;
  margin: 1px 0;
  border-right: 1px solid #d8d8d8;
}
.panel h2 {
  margin: 0;
  font-size: 14px;
  font-weight: normal;
  line-height: 22px;
  text-align: center;
}
.body {
  display: flex;
  height: 96px;
  padding-top: 2px;
}
.body button {
  display: flex;
  align-items: center;
  justify-content: center;
}
.body .on {
  background: #b9d9f2;
  outline: 1px solid #1a6fc0;
}
.small-grid {
  display: grid;
  grid-template-rows: repeat(3, 31px);
  place-items: center;
}
.big-grid {
  display: grid;
  grid-template-rows: repeat(2, 44px);
  padding-top: 1px;
  place-items: center;
}
.tall {
  flex-direction: column;
}
.body .tall {
  justify-content: flex-start;
}
.select {
  width: 63px;
}
.select .tall {
  width: 54px;
  gap: 12px;
  padding-top: 9px;
}
.select h2 {
  display: flex;
  align-items: center;
  gap: 8px;
  margin-left: -2px;
}
.properties {
  width: 80px;
}
.stack {
  flex-direction: column;
  align-items: center;
  gap: 6px;
  padding-top: 4px;
}
.stack .wide {
  width: 46px;
  height: 40px;
}
.clipboard {
  width: 99px;
}
.paste {
  width: 66px;
  color: #aaa;
  gap: 6px;
  padding-top: 2px;
}
.clipboard .small-grid {
  width: 26px;
}
.geometry {
  width: 179px;
}
.labelled {
  width: 96px;
  display: grid;
  grid-template-rows: repeat(3, 31px);
  padding-left: 7px;
}
.labelled button {
  justify-content: flex-start;
  gap: 7px;
}
.labelled .caret {
  margin-left: 4px;
}
.small-grid.three {
  grid-template-columns: 31px 31px 20px;
}
.modify {
  width: 299px;
}
.modify .big-grid {
  grid-template-columns: repeat(4, 50px);
}
.tools {
  grid-template-columns: repeat(3, 31px);
  padding-left: 1px;
}
.tools .on {
  width: 27px;
  height: 25px;
}
.view {
  width: 81px;
}
.view .small-grid.three {
  grid-template-columns: 32px 10px 38px;
}
.measure {
  width: 70px;
}
.measure .big-grid {
  grid-template-columns: 54px 8px;
}
.create {
  width: 103px;
  border: none;
}
.create .big-grid {
  grid-template-columns: repeat(2, 48px);
  padding-left: 2px;
}

/* options bar */
.options {
  display: flex;
  align-items: center;
  gap: 4px;
  height: 33px;
  padding-left: 1px;
  color: #000;
}
input[type="checkbox"] {
  appearance: none;
  width: 16px;
  height: 16px;
  border: 1px solid #333;
  background: #fff;
}
label {
  white-space: nowrap;
}

.work {
  flex: 1;
  min-height: 0;
  display: flex;
  border-top: 2px solid #ccc;
}

/* properties palette, runs off the left edge of the window */
.dock {
  flex: none;
  width: 434px;
  margin-left: -4px;
  display: flex;
  flex-direction: column;
  overflow: hidden;
  border-right: 2px solid #ccc;
  color: #000;
}
.dock-title {
  display: flex;
  align-items: center;
  justify-content: space-between;
  height: 24px;
  padding-right: 7px;
  color: #444;
}
.type {
  display: flex;
  align-items: center;
  height: 88px;
  margin-right: 3px;
  padding-right: 3px;
  border: 1px solid #ccc;
  border-width: 1px 1px 0 0;
  color: #444;
}
.preview {
  display: flex;
  align-items: center;
  justify-content: center;
  width: 82px;
  height: 82px;
  border: 1px solid #ccc;
  margin-right: 5px;
}
.type .caret {
  margin-left: auto;
}
.instance {
  display: flex;
  align-items: center;
  height: 30px;
}
.combo {
  position: relative;
  width: 333px;
}
.combo select {
  display: block;
  appearance: none;
  width: 100%;
  height: 28px;
  padding: 0;
  border: 1px solid #aaa;
  border-radius: 0;
  background: #e1e1e1;
}
.combo svg {
  position: absolute;
  right: 5px;
  top: 11px;
}
.edit-type {
  display: flex;
  gap: 5px;
  padding-left: 6px;
}
.grid-wrap {
  flex: 1;
  min-height: 0;
  display: flex;
  overflow: hidden;
}
.props {
  flex: none;
  width: 408px;
  height: max-content;
  table-layout: fixed;
  border-collapse: separate;
  border-spacing: 0;
  background: #fff;
}
.c-name {
  width: 195px;
}
.c-value {
  width: 198px;
}
.props td {
  height: 24px;
  padding: 0 0 1px 2px;
  border: 1px dotted #666;
  border-width: 0 1px 1px 0;
  line-height: 20px;
  white-space: nowrap;
}
.props td:first-child {
  padding-left: 6px;
}
.props th {
  height: 24px;
  padding: 0;
  background: #dcdcdc;
  font-weight: normal;
  text-align: left;
  line-height: 20px;
}
.props th svg {
  float: right;
  margin: 3px 6px 0 0;
}
.props td.field {
  padding: 0;
}
.field button {
  display: block;
  width: 196px;
  height: 22px;
  margin-left: 1px;
  border: 1px solid #adadad;
  border-width: 1px 2px 2px 1px;
  background: #e1e1e1;
  line-height: 18px;
}
.field input {
  display: block;
  width: 197px;
  height: 23px;
  padding: 0 6px;
  border: 1px solid #000;
  background: #fff;
}
.props td input[type="checkbox"] {
  display: block;
  margin-left: 1px;
}
.off {
  color: #7c8078;
}
.scroll {
  width: 19px;
  margin-left: 1px;
  background: #f0f0f0;
}
.scroll svg {
  margin: 6px auto 7px 4px;
}
.thumb {
  height: 326px;
  background: #cdcdcd;
}

/* drawing area */
.views {
  flex: 1;
  min-width: 0;
  display: flex;
  flex-direction: column;
}
.view-tabs {
  display: flex;
  height: 25px;
  background: #ccc;
}
.view-tab {
  display: flex;
  align-items: center;
  width: 160px;
  padding: 0 6px;
  gap: 9px;
}
.current {
  background: #fff;
  color: #222;
  font-weight: bold;
}
.close {
  margin-left: auto;
}
.canvas {
  flex: 1;
  min-height: 0;
  padding: 2px 0 0 2px;
  background: #fff;
}
.plan {
  width: 100%;
  height: 100%;
}
.fill {
  fill: #a9a9a9;
}
.under, .wall, .dim, .dim-light, .dim-dark, .slash {
  fill: none;
  stroke: #a9a9a9;
  stroke-width: 1;
}
.under, .wall {
  shape-rendering: crispEdges;
}
.slash {
  stroke-width: 5;
  stroke-linecap: round;
}
.wall {
  stroke: #000;
}
.room {
  font-family: "Liberation Sans", Arial, sans-serif;
  font-size: 86px;
  fill: #a9a9a9;
  stroke: #4a4248;
  stroke-width: 1;
}
.area {
  font-size: 95px;
}
.dim-light {
  stroke: #a9cdf5;
  stroke-width: 2;
}
.dim {
  stroke: #5aa7f5;
}
.dim-dark {
  stroke: #0a58b0;
}
.dim-text {
  font-family: "Liberation Sans", Arial, sans-serif;
  font-size: 13px;
  fill: #0a58b0;
}
.grip {
  fill: #64aff5;
  stroke: #7f8fa3;
  stroke-width: 2;
}
```
